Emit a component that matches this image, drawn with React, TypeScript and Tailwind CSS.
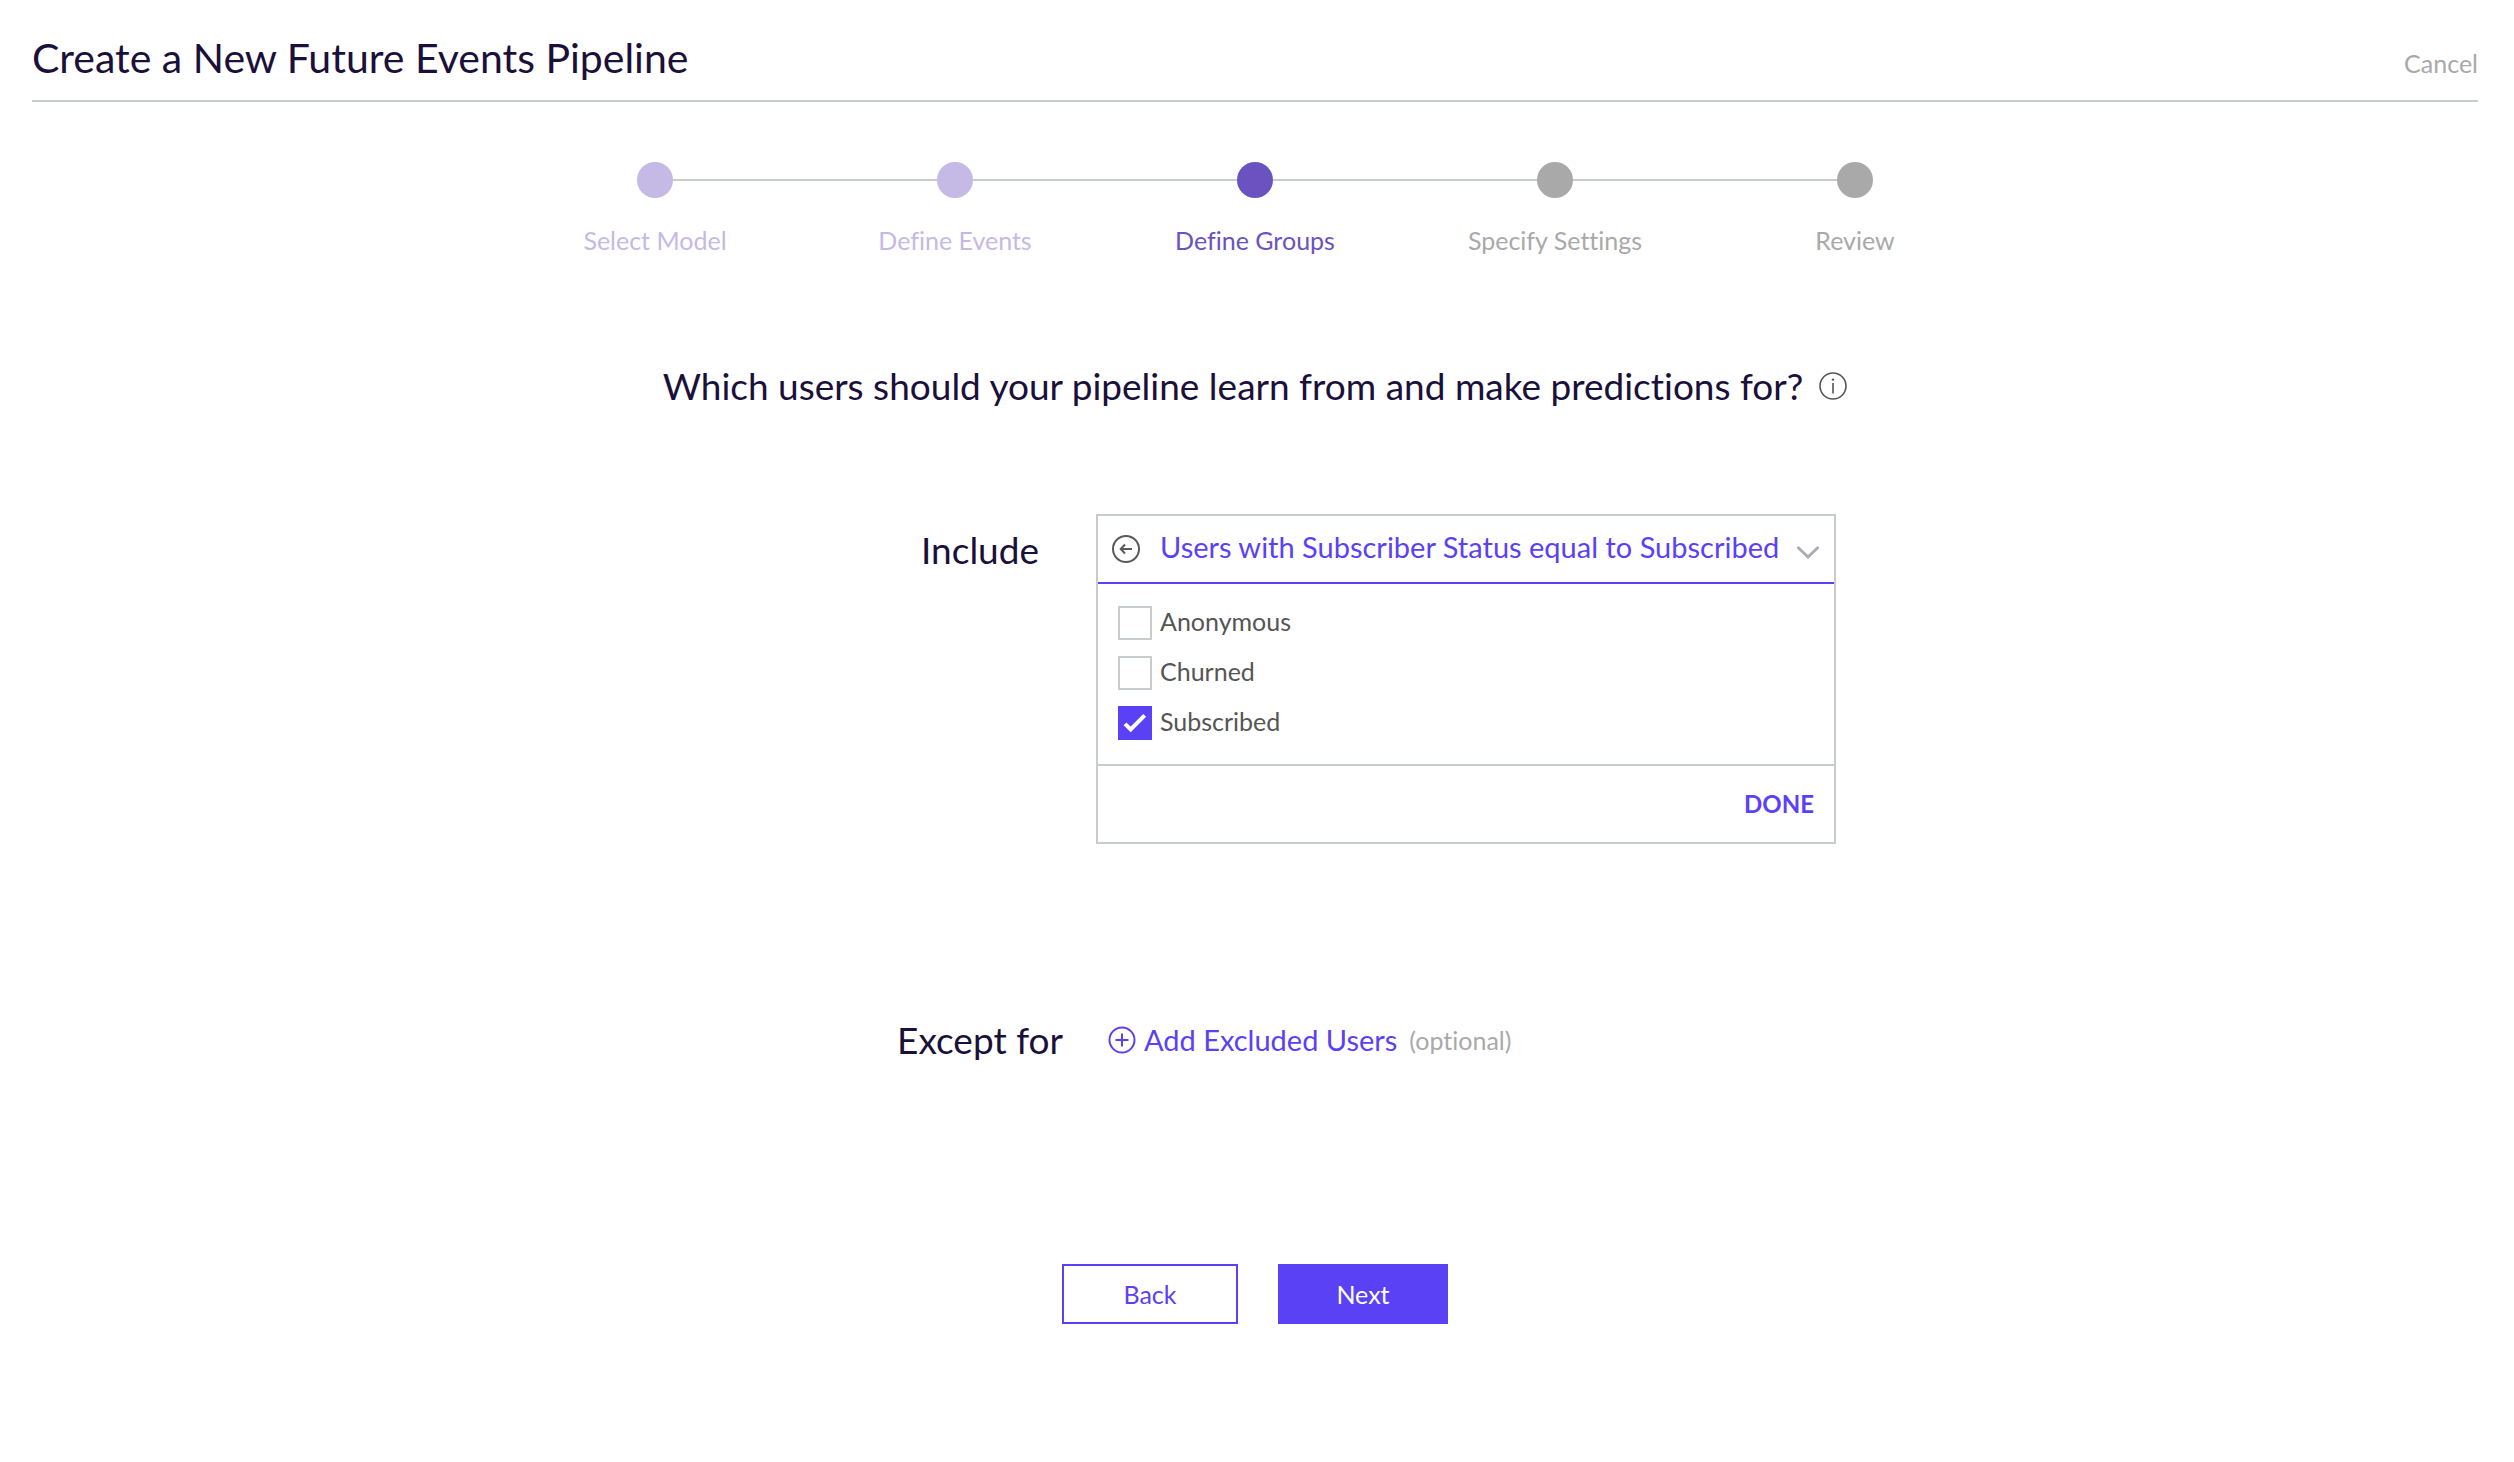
import { useState } from 'react';

const steps = [
  { name: 'Select Model', dot: 'bg-[#c5b9e5]', text: 'text-[#c5b9e5]' },
  { name: 'Define Events', dot: 'bg-[#c5b9e5]', text: 'text-[#c5b9e5]' },
  { name: 'Define Groups', dot: 'bg-[#6a53c0]', text: 'text-[#6a53c0]' },
  { name: 'Specify Settings', dot: 'bg-[#a9a9a9]', text: 'text-[#a9a9a9]' },
  { name: 'Review', dot: 'bg-[#a9a9a9]', text: 'text-[#a9a9a9]' },
];

const statuses = ['Anonymous', 'Churned', 'Subscribed'];

const InfoIcon = () => (
  <svg className="h-7 w-7 shrink-0" viewBox="0 0 28 28" fill="none" stroke="#555" strokeWidth="1.6" aria-hidden="true">
    <circle cx="14" cy="14" r="13" />
    <path d="M14 11v10.5" />
    <circle cx="14" cy="7.6" r="1.2" fill="#555" stroke="none" />
  </svg>
);

const BackIcon = () => (
  <svg className="h-7 w-7" viewBox="0 0 28 28" fill="none" stroke="#5a5a5a" strokeWidth="2" aria-hidden="true">
    <circle cx="14" cy="14" r="13" />
    <path d="M20 14H9M13 9.5L8.7 14l4.3 4.5" />
  </svg>
);

const ChevronIcon = () => (
  <svg className="h-7 w-6 shrink-0" viewBox="0 0 24 28" fill="none" stroke="#adacb3" strokeWidth="3" aria-hidden="true">
    <path d="M1.500 12L12 22L22.500 12" />
  </svg>
);

const PlusIcon = () => (
  <svg className="h-7 w-7 shrink-0" viewBox="0 0 28 28" fill="none" stroke="#5b41f5" strokeWidth="2" aria-hidden="true">
    <circle cx="14" cy="14" r="12.500" />
    <path d="M14 7.500v13M7.500 14h13" />
  </svg>
);

const Stepper = () => (
  <ol className="mx-auto mt-15 grid max-w-[1500px] grid-cols-5">
    {steps.map((step, i) => (
      <li key={step.name} className="flex flex-col items-center">
        <div className="flex w-full items-center">
          <span className={i === 0 ? 'flex-1' : 'h-0.5 flex-1 bg-[#c8cbcb]'} />
          <span className={`h-9 w-9 rounded-full ${step.dot}`} />
          <span className={i === steps.length - 1 ? 'flex-1' : 'h-0.5 flex-1 bg-[#c8cbcb]'} />
        </div>
        <span className={`mt-6.5 leading-8 ${step.text}`}>{step.name}</span>
      </li>
    ))}
  </ol>
);

const App = () => {
  const [selected, setSelected] = useState(['Subscribed']);

  const toggle = (status: string) => {
    setSelected((prev) =>
      prev.includes(status) ? prev.filter((s) => s !== status) : [...prev, status]
    );
  };

  return (
    <div className="min-h-screen bg-white pt-8.5 pr-9 pb-16 pl-8 font-['Lato',sans-serif] text-[25px] leading-8 text-[#1a1039] [font-variant-ligatures:none]">
      <header className="flex items-baseline justify-between border-b-2 border-[#c8cbcb] pb-4.5">
        <h1 className="text-[41px] leading-12">Create a New Future Events Pipeline</h1>
        <button type="button" className="text-[#a9a9a9]">Cancel</button>
      </header>

      <Stepper />

      <main>
        <div className="mt-26.5 flex items-center justify-center gap-4">
          <h2 className="text-[37px] leading-12">
            Which users should your pipeline learn from and make predictions for?
          </h2>
          <InfoIcon />
        </div>

        <div className="mx-auto mt-26 grid max-w-[1162px] grid-cols-[232px_740px] justify-end gap-y-43">
          <h3 className="pt-3 text-center text-[37px] leading-12">Include</h3>
          <div className="border-2 border-[#c8cbcb]">
            <div className="flex h-17 items-center border-b-2 border-[#5b41f5] px-3.5">
              <button type="button" aria-label="Go back"><BackIcon /></button>
              <button type="button" className="ml-5 flex flex-1 items-center justify-between text-[#5b41f5]">
                <span className="pb-1 text-[29px]">Users with Subscriber Status equal to Subscribed</span>
                <ChevronIcon />
              </button>
            </div>
            <div className="flex flex-col items-start gap-4 border-b-2 border-[#c8cbcb] px-5 pt-5.5 pb-6">
              {statuses.map((status) => (
                <label key={status} className="flex h-[34px] items-center gap-2 text-[#555]">
                  <span className="relative h-[34px] w-[34px]">
                    <input
                      type="checkbox"
                      checked={selected.includes(status)}
                      onChange={() => toggle(status)}
                      className="block h-[34px] w-[34px] appearance-none border-2 border-[#c8cbcb] checked:border-[#5b41f5] checked:bg-[#5b41f5]"
                    />
                    {selected.includes(status) && (
                      <svg className="pointer-events-none absolute inset-0" viewBox="0 0 34 34" fill="none" stroke="#fff" strokeWidth="4" aria-hidden="true">
                        <path d="M7 17.800l5.700 5.700L26.700 9.400" />
                      </svg>
                    )}
                  </span>
                  <span className="pb-1">{status}</span>
                </label>
              ))}
            </div>
            <div className="flex h-[76px] items-center justify-end px-5">
              <button type="button" className="text-[24px] font-bold text-[#5b41f5]">DONE</button>
            </div>
          </div>

          <h3 className="text-center text-[37px] leading-12">Except for</h3>
          <div className="flex items-center gap-3 pl-3">
            <button type="button" className="flex items-center gap-2 text-[29px] text-[#5b41f5]">
              <PlusIcon />
              Add Excluded Users
            </button>
            <span className="text-[#a9a9a9]">(optional)</span>
          </div>
        </div>
      </main>

      <div className="mt-50 flex justify-center gap-10">
        <button type="button" className="h-15 w-[176px] border-2 border-[#5b41f5] text-[#5b41f5]">Back</button>
        <button type="button" className="h-15 w-[170px] bg-[#5b41f5] text-white">Next</button>
      </div>
    </div>
  );
};

export default App;
